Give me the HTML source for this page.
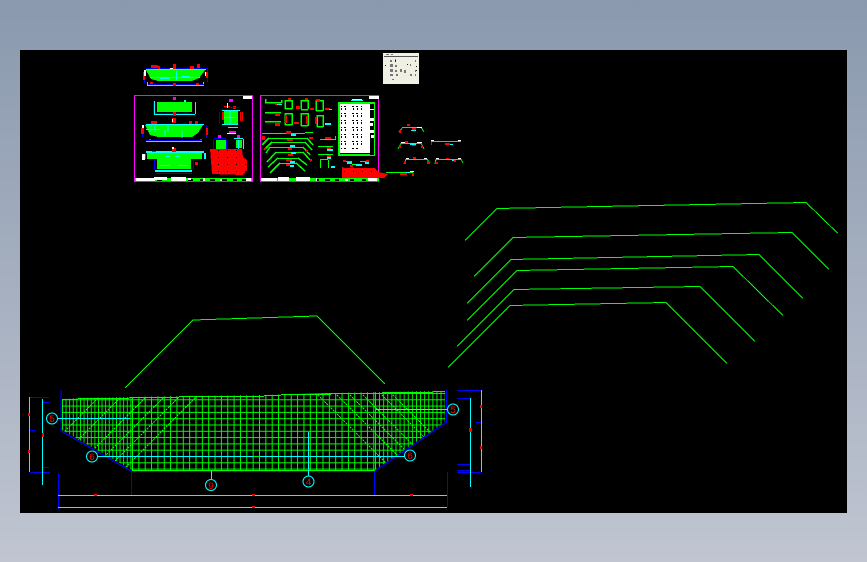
<!DOCTYPE html>
<html><head><meta charset="utf-8"><style>
html,body{margin:0;padding:0;width:867px;height:562px;overflow:hidden;background:linear-gradient(#8a99ae,#c0c5d1)}
#c{position:absolute;left:20px;top:50px;width:827px;height:463px;background:#000}
svg{position:absolute;left:0;top:0}
text{font-family:"Liberation Mono",monospace;font-size:10px;fill:#f00;text-anchor:middle}
</style></head><body><div id="c"></div>
<svg width="867" height="562" viewBox="0 0 867 562" shape-rendering="crispEdges" fill="none">
<defs>
<clipPath id="m"><polygon points="62,399 78,398 129,397 179,396 264,395 331,393 382,392 433,391 445,391 445,422 375,470 132,470 62,430"/></clipPath>
<pattern id="h" width="10" height="6.3" patternUnits="userSpaceOnUse" y="393"><rect width="10" height="1" fill="#0f0"/></pattern>
<pattern id="v1" width="3.6" height="10" patternUnits="userSpaceOnUse" x="62"><rect width="1" height="10" fill="#0f0"/></pattern>
<pattern id="v2" width="6.35" height="10" patternUnits="userSpaceOnUse" x="132"><rect width="1" height="10" fill="#0f0"/></pattern>
<pattern id="v3" width="4.1" height="10" patternUnits="userSpaceOnUse" x="375"><rect width="1" height="10" fill="#0f0"/></pattern>
<pattern id="sp" width="4" height="7" patternUnits="userSpaceOnUse"><rect x="0" y="1" width="2" height="1" fill="#000"/><rect x="1" y="3" width="1" height="2" fill="#000"/></pattern>
<pattern id="rd" width="9" height="7" patternUnits="userSpaceOnUse"><rect x="2" y="3" width="1" height="1" fill="#000"/></pattern>
</defs>

<!-- big profiles -->
<g stroke="#0f0" stroke-width="1">
<polyline points="465,240.5 497,208.5 806,202.5 838,233.5"/>
<polyline points="474,276.5 513,237.5 792,232.5 829,269.5"/>
<polyline points="467,303.5 511,259.5 759,254.5 803,298.5"/>
<polyline points="467,320.5 517,270.5 733,266.5 783,315.5"/>
<polyline points="457,346.5 514,289.5 700,286.5 755,341.5"/>
<polyline points="448,367.5 510,305.5 666,302.5 727,363.5"/>
<polyline points="125,388 193,320 317,316 385,384"/>
</g>

<!-- mesh -->
<g clip-path="url(#m)">
<rect x="60" y="388" width="390" height="84" fill="url(#h)"/>
<rect x="62" y="388" width="70" height="84" fill="url(#v1)"/>
<rect x="132" y="388" width="243" height="84" fill="url(#v2)"/>
<rect x="375" y="388" width="72" height="84" fill="url(#v3)"/>
</g>
<g stroke="#0f0">
<path d="M62.5 399.5H78M78 398.5H129M129 397.5H179M179 396.5H264M264 395.5H281M281 394.5H331M331 393.5H382M382 392.5H433M433 391.5H445M132 470.5H375"/>
</g>
<g stroke="#0f0" stroke-dasharray="2 1">
<path d="M98 398L64 432M120 398L78 440M145 398L94 449M163 398L105 456M178 398L115 461M195 398L125 468M318 395L386 463M337 395L398 456M350 395L405 450M363 395L413 445M382 395L424 437M393 395L431 433"/>
</g>
<!-- outline -->
<g stroke="#00f" stroke-width="1">
<path d="M61 390V431M374.5 472V495M131.5 472V495M58.5 473V509M447.5 472V507M446.5 390V422M131 471.5H375"/>
<path d="M61 431L131 471M375 471L447 422" stroke-width="1.3"/>
<path d="M30 397.5H49M43 402.5H50M30 472.5H50M43 467.5H49M29 430.5H35M457 390.5H481M457 398.5H470M457 464.5H470M457 470.5H470M457 472.5H481M476 422.5H481"/>
</g>
<g stroke="#0ff">
<path d="M29.5 397V472M42.5 399V485M481.5 390V472M470.5 398V487M58 495.5H447M58 507.5H447M58 418.5H130M98 456.5H253M260 456.5H405M376 409.5H448M211.5 471V480M308.5 432V476"/>
</g>
<g fill="#f00">
<rect x="28" y="413" width="2" height="3"/><rect x="28" y="450" width="2" height="3"/><rect x="42" y="433" width="2" height="4"/>
<rect x="480" y="405" width="2" height="3"/><rect x="480" y="446" width="2" height="3"/><rect x="469" y="428" width="3" height="4"/>
<rect x="94" y="494" width="3" height="2"/><rect x="252" y="494" width="3" height="2"/><rect x="410" y="494" width="3" height="2"/><rect x="252" y="506" width="3" height="2"/>
</g>
<g stroke="#0ff" fill="#000" shape-rendering="auto">
<circle cx="52" cy="418.5" r="5.5"/><circle cx="92" cy="456.5" r="5.5"/><circle cx="211" cy="485" r="5.5"/><circle cx="308.5" cy="481.5" r="5.5"/><circle cx="453" cy="409.5" r="5.5"/><circle cx="410" cy="455.5" r="5.5"/>
</g>
<text x="52" y="422">5</text><text x="92" y="460">6</text><text x="211" y="489">9</text><text x="308.5" y="485">4</text><text x="453" y="413">5</text><text x="410" y="459">6</text>

<!-- sheet 0 table -->
<rect x="383" y="53" width="36" height="31" fill="#efefe3"/>
<rect x="384" y="56" width="34" height="1" fill="#555"/>
<g fill="#777"><rect x="386" y="54" width="3" height="1"/><rect x="391" y="54" width="2" height="1"/><rect x="390" y="60" width="2" height="2"/><rect x="395" y="59" width="1" height="1"/><rect x="390" y="64" width="3" height="3"/><rect x="395" y="65" width="2" height="2"/><rect x="390" y="69" width="3" height="3"/><rect x="395" y="70" width="2" height="2"/><rect x="400" y="69" width="2" height="3"/><rect x="390" y="74" width="3" height="2"/><rect x="396" y="74" width="2" height="2"/><rect x="404" y="70" width="2" height="3"/><rect x="410" y="64" width="1" height="2"/><rect x="415" y="60" width="1" height="2"/><rect x="415" y="70" width="1" height="2"/><rect x="410" y="74" width="2" height="2"/><rect x="415" y="74" width="1" height="2"/><rect x="392" y="79" width="2" height="1"/></g>
<g fill="#222"><rect x="385" y="65" width="1" height="1"/><rect x="395" y="60" width="1" height="2"/><rect x="407" y="64" width="1" height="1"/><rect x="416" y="66" width="1" height="1"/><rect x="416" y="70" width="1" height="1"/></g>

<!-- top mini section -->
<polygon points="146,70 205,70 199,78 192,81 158,81 151,79" fill="#0f0"/>
<g stroke="#0ff"><path d="M147 85.500H204M147.500 82V86M203.500 82V86M146 69.500H206M150 77.500H200M176.500 71V80M160 78.500H170M181 76.500H190"/></g>
<g stroke="#00f"><path d="M144.500 70V83M207.500 68V82M148 84.500H204M146 68.500H208"/></g>
<g fill="#f00"><rect x="151" y="65" width="7" height="3"/><rect x="158" y="66" width="2" height="3"/><rect x="173" y="64" width="3" height="5"/><rect x="190" y="66" width="4" height="3"/><rect x="197" y="64" width="3" height="4"/><rect x="143" y="72" width="2" height="8"/><rect x="206" y="72" width="2" height="6"/><rect x="173" y="83" width="3" height="3"/><rect x="150" y="82" width="3" height="2"/><rect x="196" y="83" width="3" height="2"/></g>
<g fill="#fff"><rect x="144" y="70" width="2" height="6"/><rect x="205" y="72" width="1" height="4"/><rect x="170" y="68" width="3" height="1"/></g>

<!-- sheet 1 -->
<rect x="134.500" y="95.500" width="118" height="86" stroke="#f0f"/>
<rect x="243" y="96" width="9" height="3" fill="#fff"/>
<rect x="173" y="97" width="3" height="3" fill="#f0f"/>
<rect x="157" y="102" width="35" height="10" fill="#0f0"/>
<path d="M154.500 101V114.500H195M195.500 102V114" stroke="#0ff"/>
<path d="M156 113.500H192M153.500 101V114" stroke="#00f"/>
<rect x="173" y="112" width="3" height="4" fill="#f00"/>
<rect x="184" y="100" width="2" height="2" fill="#0ff"/>
<polygon points="145,125 203,125 198,133 192,137 158,137 150,135" fill="#0f0"/>
<g stroke="#0ff"><path d="M146 141.500H202M146 124.500H204M146 129.500H160M165 130V136M182 131V138M150 139V142M201 139V142M150 126V132M155 126V132M168 126V132"/></g>
<g stroke="#00f"><path d="M142.500 125V137M206.500 125V138M146 140.500H202"/></g>
<g fill="#f00"><rect x="151" y="121" width="6" height="3"/><rect x="172" y="118" width="4" height="5"/><rect x="189" y="121" width="3" height="3"/><rect x="195" y="121" width="3" height="3"/><rect x="141" y="128" width="3" height="6"/><rect x="206" y="128" width="2" height="7"/></g>
<g fill="#fff"><rect x="142" y="125" width="2" height="3"/><rect x="172" y="119" width="1" height="3"/></g>
<polygon points="147,153 202,153 202,159 191,159 191,169 157,169 157,159 147,159" fill="#0f0"/>
<g stroke="#0ff" stroke-width="2"><path d="M146 152H204M155 171H192M205 153V159"/></g>
<g stroke="#0ff"><path d="M160 165.500H170M178 165.500H188M165 156.500H170M175 156.500H180"/></g>
<g stroke="#00f"><path d="M154.500 160V170M193.500 160V170M156 173.500H192"/></g>
<g fill="#f00"><rect x="172" y="148" width="4" height="4"/><rect x="143" y="154" width="3" height="5"/><rect x="152" y="151" width="4" height="1"/><rect x="195" y="162" width="3" height="3"/></g>
<g fill="#fff"><rect x="142" y="154" width="3" height="6"/><rect x="172" y="147" width="2" height="2"/></g>
<!-- detail circle -->
<rect x="224" y="111" width="14" height="13" fill="#0f0"/>
<g stroke="#0ff"><path d="M222 110.500H240M222 124.500H238M224 117.500H236M230 110V124M228 127.500H238"/></g>
<g fill="#f00"><rect x="222" y="112" width="2" height="8"/><rect x="240" y="112" width="3" height="9"/><rect x="224" y="106" width="6" height="2"/><rect x="233" y="106" width="3" height="3"/></g>
<g stroke="#00f"><path d="M219.500 112V124M241.500 111V122M224 107.500H238"/></g>
<rect x="227" y="103" width="1" height="5" fill="#fff"/>
<rect x="229" y="131" width="7" height="2" fill="#f0f"/><rect x="227" y="133" width="9" height="1" fill="#fff"/>
<rect x="229" y="99" width="4" height="3" fill="#f0f"/>
<rect x="216" y="140" width="10" height="9" fill="#0f0"/>
<g stroke="#00f"><path d="M213.500 139V149M226.500 139V149M214 138.500H226"/></g>
<rect x="218" y="135" width="3" height="3" fill="#f0f"/>
<rect x="236" y="140" width="6" height="8" fill="#0f0"/>
<g stroke="#0ff"><path d="M234 138.500H243M243.500 139V149M238.500 140V152"/></g>
<rect x="237" y="135" width="3" height="3" fill="#f0f"/>
<polygon points="210,149 242,149 243,157 247,160 247,170 243,175 212,174" fill="#f00"/>
<polygon points="210,149 242,149 243,157 247,160 247,170 243,175 212,174" fill="url(#rd)"/>
<rect x="135" y="178" width="117" height="3" fill="#0f0"/>
<g fill="#000"><rect x="157" y="179" width="5" height="2"/><rect x="172" y="179" width="3" height="2"/><rect x="188" y="179" width="5" height="2"/><rect x="200" y="179" width="4" height="2"/><rect x="210" y="179" width="5" height="2"/><rect x="222" y="179" width="5" height="2"/><rect x="233" y="179" width="4" height="2"/><rect x="242" y="179" width="4" height="2"/></g>
<g fill="#fff"><rect x="136" y="178" width="19" height="3"/><rect x="154" y="177" width="13" height="3"/><rect x="171" y="177" width="15" height="4"/><rect x="188" y="178" width="3" height="2"/><rect x="203" y="178" width="2" height="3"/><rect x="220" y="179" width="2" height="2"/><rect x="246" y="178" width="5" height="3"/></g>

<!-- sheet 2 -->
<rect x="260.500" y="95.500" width="118" height="86" stroke="#f0f"/>
<rect x="369" y="96" width="10" height="3" fill="#fff"/>
<rect x="339" y="103" width="35" height="52" stroke="#0f0" stroke-width="2"/>
<rect x="340" y="104" width="30" height="49" fill="#fff"/>
<rect x="341" y="105" width="6" height="44" fill="url(#sp)"/>
<rect x="350" y="105" width="4" height="44" fill="url(#sp)"/>
<rect x="355" y="105" width="4" height="44" fill="url(#sp)"/>
<rect x="361" y="105" width="2" height="40" fill="url(#sp)"/>
<rect x="370" y="104" width="4" height="51" fill="#000"/>
<g fill="#fff"><rect x="370" y="109" width="4" height="1"/><rect x="370" y="118" width="4" height="3"/><rect x="370" y="123" width="3" height="3"/><rect x="370" y="130" width="4" height="3"/><rect x="371" y="135" width="3" height="3"/><rect x="352" y="99" width="10" height="2"/></g>
<rect x="351" y="100" width="12" height="1" fill="#0ff"/>
<g stroke="#0f0">
<path d="M265 102.500H281M281.500 100V103M265.500 99V102M265 112.500H281M265 121.500H281M285 100V109M292 100V109M285 100.500H292M285 108.500H292M301 100V109M308 100V109M301 100.500H308M301 109.500H308M316 100V111M323 100V111M316 100.500H323M316 110.500H323M285 113V125M292 113V125M285 113.500H292M285 124.500H292M301 113V126M308 113V126M301 113.500H308M301 125.500H308M317 115V127M323 115V127M317 115.500H323M317 126.500H323" stroke-width="1.500"/>
<path d="M262 133.500H305M305 132.500H313M269 138.500H307M272 142.500H305M270 147.500H303M276 152.500H303M278 158.500H298M280 163.500H296M320 139.500H335M335.500 136V140M318 146.500H333M318 154.500H333M320 159.500H328M320.500 160V168M328.500 160V168"/>
<path d="M269 138L262 145M307 138L313 145M272 142L264 150M305 142L312 150M270 147L266 153M303 147L310 155M276 152L267 162M303 152L311 161M278 158L268 167M298 158L307 165M280 163L270 173M296 163L305 171" stroke-width="1.500"/>
</g>
<g fill="#f00">
<rect x="275" y="103" width="5" height="2"/><rect x="288" y="98" width="3" height="2"/><rect x="296" y="106" width="4" height="3"/><rect x="305" y="98" width="3" height="2"/><rect x="310" y="108" width="4" height="2"/><rect x="316" y="99" width="4" height="2"/><rect x="325" y="108" width="5" height="2"/><rect x="275" y="113" width="5" height="3"/><rect x="275" y="123" width="5" height="3"/><rect x="285" y="115" width="2" height="8"/><rect x="294" y="122" width="5" height="2"/><rect x="306" y="116" width="2" height="8"/><rect x="315" y="117" width="2" height="7"/>
<rect x="286" y="131" width="5" height="3"/><rect x="262" y="136" width="3" height="4"/><rect x="287" y="139" width="6" height="2"/><rect x="288" y="148" width="4" height="2"/><rect x="288" y="154" width="5" height="2"/><rect x="286" y="159" width="6" height="2"/><rect x="286" y="164" width="4" height="2"/><rect x="309" y="137" width="4" height="2"/><rect x="325" y="137" width="6" height="2"/><rect x="264" y="148" width="2" height="2"/><rect x="306" y="150" width="2" height="2"/><rect x="310" y="159" width="2" height="2"/><rect x="327" y="147" width="4" height="2"/><rect x="327" y="155" width="4" height="2"/>
</g>
<g fill="#0ff"><rect x="291" y="134" width="5" height="2"/><rect x="290" y="145" width="5" height="2"/><rect x="291" y="152" width="5" height="2"/><rect x="290" y="161" width="5" height="2"/><rect x="290" y="165" width="4" height="2"/><rect x="327" y="149" width="6" height="2"/><rect x="327" y="157" width="4" height="2"/><rect x="331" y="166" width="4" height="2"/><rect x="277" y="104" width="5" height="1"/><rect x="329" y="109" width="3" height="1"/><rect x="325" y="123" width="6" height="2"/></g>
<!-- bottom red -->
<polygon points="342,167 345,168 375,168 378,172 388,174 384,178 342,178" fill="#f00"/>
<polygon points="342,167 345,168 375,168 378,172 388,174 384,178 342,178" fill="url(#rd)"/>
<g stroke="#0f0"><path d="M344 161.500H352M360 161.500H368M352 164.500H362"/></g>
<g fill="#0ff"><rect x="347" y="162" width="5" height="2"/><rect x="356" y="164" width="6" height="2"/><rect x="365" y="162" width="4" height="2"/></g>
<g fill="#f00"><rect x="343" y="160" width="3" height="2"/><rect x="350" y="165" width="3" height="2"/><rect x="366" y="160" width="3" height="2"/></g>
<rect x="261" y="178" width="118" height="3" fill="#0f0"/>
<g fill="#000"><rect x="283" y="179" width="5" height="2"/><rect x="298" y="179" width="4" height="2"/><rect x="316" y="179" width="3" height="2"/><rect x="325" y="179" width="5" height="2"/><rect x="335" y="179" width="4" height="2"/><rect x="350" y="179" width="4" height="2"/><rect x="362" y="179" width="4" height="2"/></g>
<g fill="#fff"><rect x="261" y="178" width="16" height="3"/><rect x="278" y="177" width="11" height="4"/><rect x="296" y="177" width="14" height="4"/><rect x="316" y="178" width="1" height="3"/><rect x="345" y="179" width="3" height="2"/><rect x="368" y="178" width="9" height="3"/></g>

<!-- small profiles -->
<g stroke="#0f0">
<path d="M403 127.500H421M401 143.500H421M431 141.500H461M406 159.500H427M436 159.500H461M386 172.500H413"/>
<path d="M403 127L399 132M421 127L424 132M401 143L398 149M421 143L424 149M406 159L404 164M427 159L430 163M436 159L435 164M461 159L463 163"/>
</g>
<g fill="#fff"><rect x="417" y="127" width="5" height="1"/><rect x="401" y="142" width="5" height="1"/><rect x="417" y="142" width="5" height="1"/><rect x="431" y="140" width="3" height="1"/><rect x="458" y="140" width="3" height="1"/><rect x="406" y="158" width="3" height="1"/><rect x="424" y="158" width="3" height="1"/><rect x="436" y="158" width="3" height="1"/><rect x="458" y="158" width="3" height="1"/><rect x="410" y="171" width="4" height="1"/></g>
<g fill="#f00"><rect x="407" y="124" width="3" height="2"/><rect x="412" y="128" width="4" height="2"/><rect x="399" y="130" width="2" height="3"/><rect x="405" y="141" width="3" height="2"/><rect x="412" y="144" width="4" height="2"/><rect x="399" y="145" width="2" height="3"/><rect x="421" y="146" width="2" height="2"/><rect x="445" y="143" width="5" height="2"/><rect x="431" y="142" width="1" height="3"/><rect x="413" y="157" width="3" height="2"/><rect x="404" y="161" width="2" height="3"/><rect x="427" y="161" width="3" height="3"/><rect x="446" y="158" width="3" height="1"/><rect x="454" y="160" width="2" height="2"/><rect x="435" y="162" width="3" height="2"/><rect x="400" y="173" width="7" height="2"/><rect x="412" y="173" width="2" height="3"/></g>
<g fill="#0ff"><rect x="411" y="130" width="5" height="1"/><rect x="410" y="143" width="6" height="2"/><rect x="450" y="144" width="3" height="1"/><rect x="452" y="160" width="2" height="1"/><rect x="406" y="172" width="4" height="1"/></g>
</svg>
</body></html>
